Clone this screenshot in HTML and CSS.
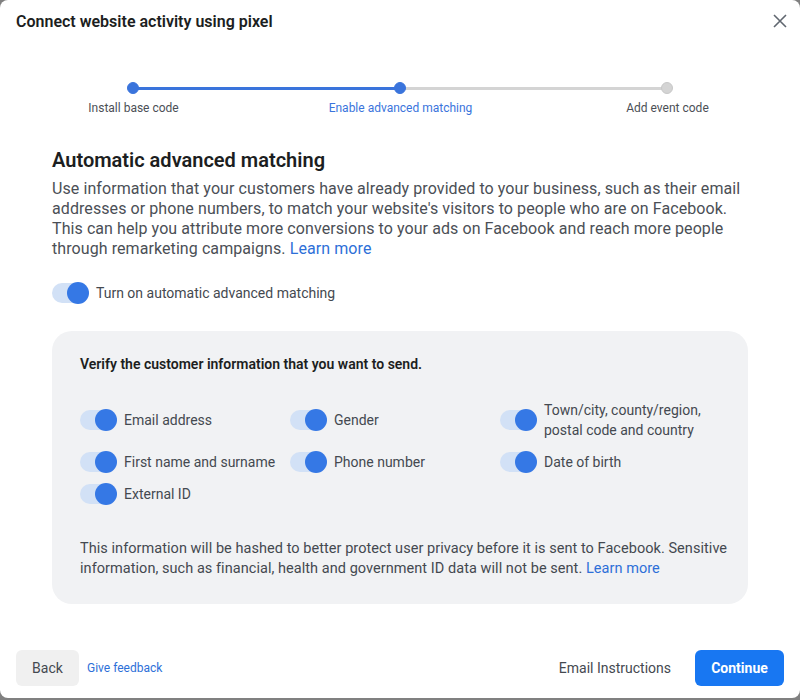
FILE: index.html
```html
<html>
<head>
<link rel="stylesheet" href="styles.css">
<title>Connect website activity using pixel</title>
</head>
<body>
<div class="dialog">
    <div class="header">
        <h2 class="title">Connect website activity using pixel</h2>
        <span class="close">
            <svg width="14" height="14" viewBox="0 0 14 14"><path d="M1 1L13 13M13 1L1 13" stroke="#606770" stroke-width="1.6" fill="none"/></svg>
        </span>
    </div>

    <div class="stepper">
        <div class="track">
            <div class="line done"></div>
            <div class="line todo"></div>
            <span class="dot dot1 active"></span>
            <span class="dot dot2 active"></span>
            <span class="dot dot3"></span>
        </div>
        <div class="steps">
            <span class="step">Install base code</span>
            <span class="step current">Enable advanced matching</span>
            <span class="step">Add event code</span>
        </div>
    </div>

    <div class="content">
        <h3 class="heading">Automatic advanced matching</h3>
        <p class="intro">Use information that your customers have already provided to your business, such as their email addresses or phone numbers, to match your website's visitors to people who are on Facebook. This can help you attribute more conversions to your ads on Facebook and reach more people through remarketing campaigns. <a class="link">Learn more</a></p>

        <div class="toggleRow main">
            <span class="toggle"><span class="knob"></span></span>
            <span class="toggleLabel">Turn on automatic advanced matching</span>
        </div>

        <div class="panel">
            <div class="panelTitle">Verify the customer information that you want to send.</div>
            <div class="grid">
                <div class="toggleRow"><span class="toggle"><span class="knob"></span></span><span class="toggleLabel">Email address</span></div>
                <div class="toggleRow"><span class="toggle"><span class="knob"></span></span><span class="toggleLabel">Gender</span></div>
                <div class="toggleRow"><span class="toggle"><span class="knob"></span></span><span class="toggleLabel">Town/city, county/region, postal code and country</span></div>
                <div class="toggleRow"><span class="toggle"><span class="knob"></span></span><span class="toggleLabel">First name and surname</span></div>
                <div class="toggleRow"><span class="toggle"><span class="knob"></span></span><span class="toggleLabel">Phone number</span></div>
                <div class="toggleRow"><span class="toggle"><span class="knob"></span></span><span class="toggleLabel">Date of birth</span></div>
                <div class="toggleRow"><span class="toggle"><span class="knob"></span></span><span class="toggleLabel">External ID</span></div>
            </div>
            <p class="note">This information will be hashed to better protect user privacy before it is sent to Facebook. Sensitive information, such as financial, health and government ID data will not be sent. <a class="link">Learn more</a></p>
        </div>
    </div>

    <div class="footer">
        <button class="btn back">Back</button>
        <a class="feedback">Give feedback</a>
        <span class="spacer"></span>
        <span class="emailLink">Email Instructions</span>
        <button class="btn primary">Continue</button>
    </div>
</div>
</body>
</html>
```

FILE: styles.css
```css
html, body {margin: 0;
            padding: 0;
            background-color: #808080;
            font-family: Roboto, "Liberation Sans", sans-serif;
            color: #1c1e21}
.dialog {width: 800px;
         height: 698px;
         background-color: white;
         border-radius: 8px;
         display: flex;
         flex-direction: column;
         box-sizing: border-box}
.header {display: flex;
         align-items: center;
         justify-content: space-between;
         padding: 10px 13px 0 16px;
         height: 22px}
.title {font-size: 16px;
        font-weight: 600;
        margin: 0}
.close {display: flex; width: 14px; height: 14px}

.stepper {margin: 50px 0 0 0}
.track {position: relative; height: 12px; margin: 0 133px 0 133px}
.line {position: absolute; top: 5px; height: 3px}
.done {left: 0; width: 50%; background-color: #3a74dc}
.todo {left: 50%; width: 50%; background-color: #d4d4d4}
.dot {position: absolute;
      top: 0;
      width: 12px;
      height: 12px;
      border-radius: 50%;
      margin-left: -6px;
      background-color: #d4d4d4;
      box-sizing: border-box;
      border: 1px solid #c8c8c8}
.dot.active {background-color: #3a74dc; border-color: #3a74dc}
.dot1 {left: 0}
.dot2 {left: 50%}
.dot3 {left: 100%}
.steps {display: grid;
        grid-template-columns: repeat(3, 267px);
        text-align: center;
        margin-top: 7px}
.step {font-size: 12px; color: #4b4f56}
.step.current {color: #3a74dc}

.content {padding: 0 52px}
.heading {font-size: 20px;
          font-weight: 600;
          margin: 33px 0 0 0;
          color: #1c1e21}
.intro {font-size: 16px;
        line-height: 20px;
        color: #4b4f56;
        margin: 7px 0 0 0;
        letter-spacing: 0.08px}
.link {color: #2d6fd8; text-decoration: none}

.toggleRow {display: flex; align-items: center; gap: 8px}
.toggleRow.main {margin-top: 24px}
.toggle {position: relative;
         flex: none;
         width: 36px;
         height: 20px;
         border-radius: 10px;
         background-color: #d2e1f6}
.knob {position: absolute;
       right: -1px;
       top: -1px;
       width: 22px;
       height: 22px;
       border-radius: 50%;
       background-color: #3578e5}
.toggleLabel {font-size: 14px; color: #444950; line-height: 20px}

.panel {background-color: #f1f2f4;
        border-radius: 20px;
        margin-top: 28px;
        padding: 25px 8px 25px 28px}
.panelTitle {font-size: 14px; font-weight: 600; color: #1c1e21}
.grid {display: grid;
       grid-template-columns: 210px 210px 1fr;
       row-gap: 12px;
       margin-top: 28px}
.note {font-size: 14.5px;
       line-height: 20px;
       color: #444950;
       margin: 35px 0 0 0;
       letter-spacing: 0.05px}

.footer {margin-top: auto;
         display: flex;
         align-items: center;
         padding: 0 16px 12px 16px}
.btn {font-family: Roboto, "Liberation Sans", sans-serif;
      font-size: 14px;
      border: none;
      border-radius: 6px;
      height: 36px}
.back {background-color: #f0f0f0; color: #444950; width: 63px}
.feedback {font-size: 12px; color: #2d6fd8; margin-left: 8px}
.spacer {flex: 1}
.emailLink {font-size: 14px; color: #444950; margin-right: 24px}
.primary {background-color: #1877f2; color: white; font-weight: 700; width: 89px}
```
